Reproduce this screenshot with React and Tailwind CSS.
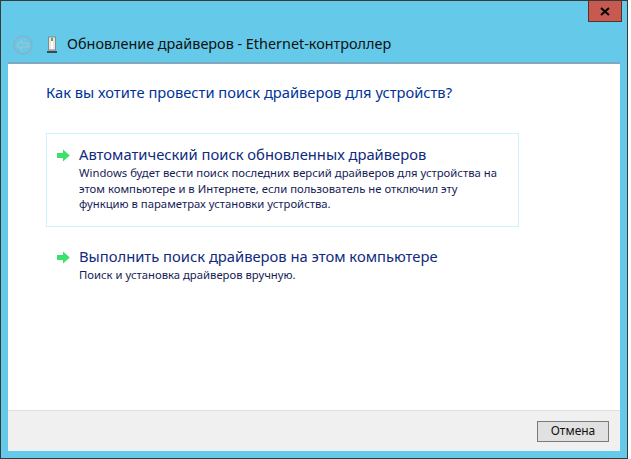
const font = { fontFamily: '"Noto Sans", "Open Sans", sans-serif' };

function Arrow() {
  return (
    <svg width="13" height="13" viewBox="0 0 13 13" className="shrink-0">
      <path d="M0 4H6V0.5L12.8 6.5L6 12.5V9H0Z" fill="#3ce06c" />
    </svg>
  );
}

function Option({ title, lines, selected }) {
  return (
    <div className={`flex gap-[9px] pl-[10px] border ${selected ? "border-[#ccf4fc] h-[94px] pt-[10px]" : "border-transparent h-[64px] mt-[8px] pt-[10px]"}`}>
      <div className="pt-[5px]"><Arrow /></div>
      <div className="flex flex-col">
        <div className="text-[14.75px] leading-[20px] text-[#0f2a80]">{title}</div>
        <div className="text-[11.3px] leading-[15.5px] text-[#151c55] whitespace-pre-line pt-[1px]">{lines}</div>
      </div>
    </div>
  );
}

export default function App() {
  return (
    <div style={font} className="w-[628px] h-[459px] border-[1px] border-[#3a3a3a] bg-[#65c9ea] flex flex-col">
      <div className="h-[20px] flex justify-end pr-[5px] shrink-0">
        <div className="w-[34px] h-[21px] bg-[#c75a50] border border-[#5a302c] border-t-0 flex items-center justify-center">
          <svg width="10" height="9" viewBox="0 0 10 9"><path d="M1 1L9 8M9 1L1 8" stroke="#000" strokeWidth="2" /></svg>
        </div>
      </div>
      <div className="h-[41px] flex items-center pl-[12px] pt-[6px] shrink-0">
        <svg width="20" height="20" viewBox="0 0 20 20" className="shrink-0">
          <circle cx="10" cy="10" r="9" fill="none" stroke="#86b2c4" strokeWidth="1.5" />
          <path d="M4 10L8.5 5.5V8.2H15.5V11.8H8.5V14.5Z" fill="none" stroke="#9cc3d0" strokeWidth="1.3" />
        </svg>
        <svg width="12" height="18" viewBox="0 0 12 18" className="ml-[13px] shrink-0">
          <rect x="2.5" y="1" width="7" height="13" fill="#e6e6e6" stroke="#8a8a8a" />
          <rect x="5" y="3" width="2" height="10" fill="#fff" />
          <rect x="5" y="2" width="2" height="3" fill="#4cb04c" />
          <rect x="1" y="15" width="10" height="2" fill="#3f4a50" />
        </svg>
        <span className="ml-[9px] text-[14.4px] text-[#111] leading-none">Обновление драйверов - Ethernet-контроллер</span>
      </div>
      <div className="mx-[7px] flex-1 flex flex-col border-t-[2px] border-[#7fa9bf] bg-white min-h-0">
        <div className="flex-1 pl-[38px] pr-[100px]">
          <div className="mt-[18px] text-[14.7px] leading-[20px] text-[#003399] whitespace-nowrap">Как вы хотите провести поиск драйверов для устройств?</div>
          <div className="mt-[31px] w-[473px]">
            <Option selected title="Автоматический поиск обновленных драйверов" lines={"Windows будет вести поиск последних версий драйверов для устройства на\nэтом компьютере и в Интернете, если пользователь не отключил эту\nфункцию в параметрах установки устройства."} />
            <Option title="Выполнить поиск драйверов на этом компьютере" lines="Поиск и установка драйверов вручную." />
          </div>
        </div>
        <div className="h-[41px] bg-[#f0f0f0] border-t border-[#dfdfdf] flex items-center justify-end pr-[11px] shrink-0">
          <button className="w-[72px] h-[21px] bg-[#e1e1e1] border border-[#7a7a7a] text-[12px] leading-none text-[#111]">Отмена</button>
        </div>
      </div>
      <div className="h-[7px] shrink-0" />
    </div>
  );
}
